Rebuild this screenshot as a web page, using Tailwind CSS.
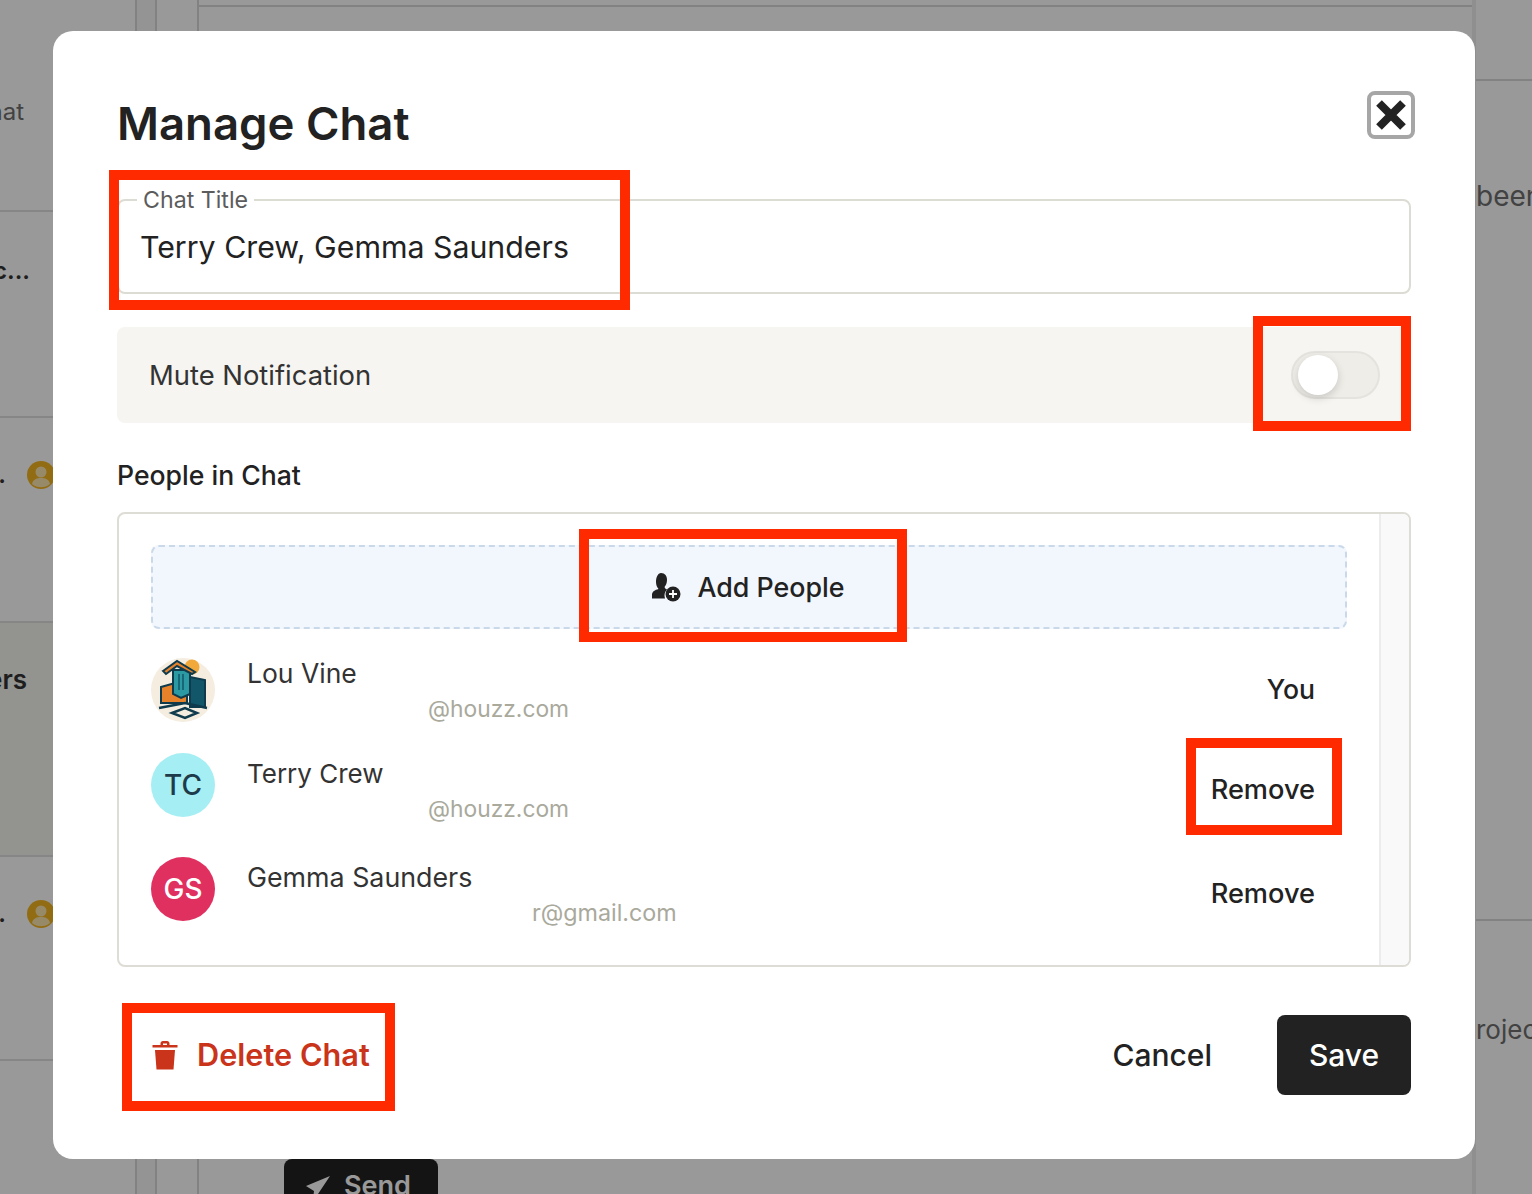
<!DOCTYPE html>
<html lang="en">
<head>
  <meta charset="UTF-8" />
  <title>Manage Chat</title>
  <script src="https://cdn.jsdelivr.net/npm/@tailwindcss/browser@4"></script>
</head>
<body class="font-['Inter',sans-serif] text-[#222]">

  <!-- page behind the dialog -->
  <div class="flex h-[1194px] w-[1532px] overflow-hidden bg-white">
    <div class="w-[137px] shrink-0 border-r-2 border-[#d9d9d9] text-[#6e6e6e]">
      <div class="h-[212px] border-b-2 border-[#e0e0e0] pt-[98px]"><div class="flex w-[24px] justify-end overflow-hidden whitespace-nowrap text-[24px] leading-[28px]">Group chat</div></div>
      <div class="h-[206px] border-b-2 border-[#e0e0e0] pt-[45px]"><div class="flex w-[30px] justify-end overflow-hidden whitespace-nowrap text-[24px] leading-[28px] font-semibold text-[#333]">Roofing c...</div></div>
      <div class="flex h-[205px] items-start gap-[21px] border-b-2 border-[#e0e0e0] pt-[43px]">
        <div class="flex w-[6px] justify-end overflow-hidden text-[24px] leading-[28px] font-semibold text-[#333]">...</div>
        <svg width="28" height="28" viewBox="0 0 28 28"><circle cx="14" cy="14" r="14" fill="#f4b420"/><circle cx="14" cy="11" r="5.500" fill="#fbe6b0"/><path d="M5 23c1-5 5-6 9-6s8 1 9 6a14 14 0 0 1-18 0z" fill="#fbe6b0"/></svg>
      </div>
      <div class="h-[234px] border-b-2 border-[#e0e0e0] bg-[#f6f5f1] pt-[43px]"><div class="flex w-[27px] justify-end overflow-hidden whitespace-nowrap text-[26px] leading-[28px] font-semibold text-[#333]">Saunders</div></div>
      <div class="flex h-[204px] items-start gap-[21px] border-b-2 border-[#e0e0e0] pt-[43px]">
        <div class="flex w-[6px] justify-end overflow-hidden text-[24px] leading-[28px] font-semibold text-[#333]">...</div>
        <svg width="28" height="28" viewBox="0 0 28 28"><circle cx="14" cy="14" r="14" fill="#f4b420"/><circle cx="14" cy="11" r="5.500" fill="#fbe6b0"/><path d="M5 23c1-5 5-6 9-6s8 1 9 6a14 14 0 0 1-18 0z" fill="#fbe6b0"/></svg>
      </div>
    </div>
    <div class="w-[20px] shrink-0 border-r-2 border-[#d9d9d9] bg-[#f7f7f7]"></div>
    <div class="w-[42px] shrink-0 border-r-2 border-[#d9d9d9]"></div>
    <div class="flex w-[1273px] shrink-0 flex-col">
      <div class="mt-[5px] border-t-2 border-[#d9d9d9]"></div>
      <div class="flex flex-1 items-end pl-[85px]">
        <div class="flex h-[35px] w-[154px] items-start gap-[14px] rounded-t-lg bg-[#222] pt-[11px] pl-[22px] text-[27px] leading-[32px] font-semibold text-white">
          <svg class="mt-[6px]" width="24" height="24" viewBox="0 0 24 24" fill="#fff"><path d="M24 0 0 10l8 5-1 9 5-6z"/></svg>
          Send
        </div>
      </div>
    </div>
    <div class="flex-1 border-l-4 border-[#efefef] text-[#6e6e6e]">
      <div class="h-[81px] border-b-2 border-[#d9d9d9]"></div>
      <div class="h-[840px] overflow-hidden border-b-2 border-[#d9d9d9] pt-[99px] text-[28px] leading-[32px] whitespace-nowrap">been</div>
      <div class="overflow-hidden pt-[93px] text-[26px] leading-[32px] whitespace-nowrap">rojec</div>
    </div>
  </div>

  <!-- dialog -->
  <div class="fixed inset-0 bg-black/40 pt-[31px] pl-[53px]">
    <div class="relative h-[1128px] w-[1422px] rounded-[20px] bg-white pt-[60px] pr-[64px] pl-[64px]">
      <div class="flex items-start justify-between">
        <h1 class="text-[45.500px] leading-[66px] font-semibold">Manage Chat</h1>
        <button class="-mr-[4px] flex h-[48px] w-[48px] items-center justify-center rounded-[8px] border-4 border-[#a6a6a6]">
          <svg width="34" height="34" viewBox="0 0 34 34"><path d="M5 5 29 29M29 5 5 29" stroke="#222" stroke-width="8" fill="none"/></svg>
        </button>
      </div>

      <fieldset class="mt-[29px] h-[108px] rounded-[8px] border-2 border-[#dcdcd4] pr-[22px] pl-[18px]">
        <legend class="px-[6px] text-[23.200px] leading-[28px] text-[#5c5c5c]">Chat Title</legend>
        <div class="mt-[13px] pl-[3px] text-[30.300px] leading-[40px]">Terry Crew, Gemma Saunders</div>
      </fieldset>

      <div class="mt-[33px] flex h-[96px] items-center justify-between rounded-[8px] bg-[#f6f5f1] pr-[31px] pl-[32px]">
        <span class="text-[27.400px] leading-[36px] text-[#333]">Mute Notification</span>
        <span class="relative h-[48px] w-[89px] rounded-full border-2 border-[#e4e3dd] bg-[#eeede8]">
          <span class="absolute top-[2px] left-[5px] h-[40px] w-[40px] rounded-full bg-white shadow-[0_3px_8px_rgba(0,0,0,0.16)]"></span>
        </span>
      </div>

      <h2 class="mt-[33px] text-[26.600px] leading-[38px] font-medium">People in Chat</h2>

      <div class="mt-[18px] flex h-[455px] overflow-hidden rounded-[8px] border-2 border-[#dddcd5]">
        <div class="flex-1 pt-[31px] pr-[32px] pl-[32px]">
          <div class="flex h-[84px] items-center justify-center gap-[16px] rounded-[8px] border-2 border-dashed border-[#c9d9e9] bg-[#f2f6fd] pr-[2px] text-[26.800px] font-medium">
            <svg width="30" height="30" viewBox="0 0 30 30" fill="#222">
              <path d="M10 1c4 0 6 3 6 7 0 3-1 5-2.500 7 .5 1.500 1.500 2 2.500 2.500-1.500 1.500-2.500 3.500-2.500 6 0 1 .2 2 .6 3H1v-3.500c0-3.500 3-5 6.500-6-1.500-2-2.500-4-2.500-7 0-5 2-9 5-9z"/>
              <circle cx="22" cy="22" r="7.500"/>
              <path d="M22 18v8M18 22h8" stroke="#fff" stroke-width="1.800"/>
            </svg>
            Add People
          </div>

          <!-- Lou Vine -->
          <div class="mt-[29px] flex h-[64px] items-center">
            <svg class="shrink-0" width="64" height="64" viewBox="0 0 64 64">
              <circle cx="32" cy="32" r="32" fill="#f4ede0"/>
              <circle cx="41" cy="9" r="7.500" fill="#f2a93b"/>
              <path d="M39 19l15 3v27H39z" fill="#12566a" stroke="#0f3b4c" stroke-width="2"/>
              <path d="M10 29l14-4 12 3v17H10z" fill="#e8822a" stroke="#0f3b4c" stroke-width="2"/>
              <path d="M22 12h17v24l-9 4-8-4z" fill="#2b9aa3" stroke="#0f3b4c" stroke-width="2"/>
              <path d="M28 16v16M32 16v16" stroke="#12566a" stroke-width="1.500"/>
              <path d="M12 13 26 3l18 11-3 2-15-8-11 8z" fill="#e8822a" stroke="#0f3b4c" stroke-width="2"/>
              <path d="M8 50 34 45l22 5M21 55l13-5 12 5-12 5z" fill="none" stroke="#0f3b4c" stroke-width="2.500"/>
            </svg>
            <div class="ml-[32px] flex-1 self-start">
              <div class="-mt-[3px] text-[26.500px] leading-[36px] text-[#333]">Lou Vine</div>
              <div class="pl-[181px] text-[22.800px] leading-[36px] text-[#a9a99c]">@houzz.com</div>
            </div>
            <span class="mr-[32px] text-[26.600px] font-medium">You</span>
          </div>

          <!-- Terry Crew -->
          <div class="mt-[31px] flex h-[64px] items-center">
            <div class="flex h-[64px] w-[64px] shrink-0 items-center justify-center rounded-full bg-[#a5eef3] text-[28px] font-medium text-[#1d3b4a]">TC</div>
            <div class="ml-[32px] flex-1 self-start">
              <div class="mt-[1px] text-[26px] leading-[40px] text-[#333]">Terry Crew</div>
              <div class="pl-[181px] text-[22.800px] leading-[30px] text-[#a9a99c]">@houzz.com</div>
            </div>
            <span class="mt-[10px] mr-[32px] text-[27.200px] font-medium">Remove</span>
          </div>

          <!-- Gemma Saunders -->
          <div class="mt-[40px] flex h-[64px] items-center">
            <div class="flex h-[64px] w-[64px] shrink-0 items-center justify-center rounded-full bg-[#e0305f] text-[28px] font-medium text-white">GS</div>
            <div class="ml-[32px] flex-1 self-start">
              <div class="text-[26.800px] leading-[40px] text-[#333]">Gemma Saunders</div>
              <div class="pl-[285px] text-[23.300px] leading-[32px] text-[#a9a99c]">r@gmail.com</div>
            </div>
            <span class="mt-[10px] mr-[32px] text-[27.200px] font-medium">Remove</span>
          </div>
        </div>
        <div class="w-[30px] shrink-0 border-l-2 border-[#ececec] bg-[#f9f9f9]"></div>
      </div>

      <div class="mt-[48px] flex items-center justify-between">
        <button class="flex items-center gap-[19px] pl-[35px] text-[30.700px] font-semibold text-[#c9341a]">
          <svg width="26" height="30" viewBox="0 0 26 30" fill="#c9341a">
            <path d="M8.500 5V3.500C8.500 2 9.500 1 11 1h4c1.500 0 2.500 1 2.500 2.500V5h8v2.500H.5V5zM11 5h4V3.500h-4z"/>
            <path d="M3 10h20l-1.500 19.500h-17z"/>
          </svg>
          Delete Chat
        </button>
        <div class="flex items-center gap-[65px]">
          <button class="text-[30px] font-medium">Cancel</button>
          <button class="h-[80px] w-[134px] rounded-[8px] bg-[#222] text-[30px] font-medium text-white">Save</button>
        </div>
      </div>
    </div>

    <!-- red callouts drawn over the dialog -->
    <div class="absolute top-[170px] left-[109px] h-[140px] w-[521px] border-10 border-[#ff2a00]"></div>
    <div class="absolute top-[316px] left-[1253px] h-[115px] w-[158px] border-10 border-[#ff2a00]"></div>
    <div class="absolute top-[529px] left-[579px] h-[113px] w-[328px] border-10 border-[#ff2a00]"></div>
    <div class="absolute top-[738px] left-[1186px] h-[97px] w-[156px] border-10 border-[#ff2a00]"></div>
    <div class="absolute top-[1003px] left-[122px] h-[108px] w-[273px] border-10 border-[#ff2a00]"></div>
  </div>
</body>
</html>
